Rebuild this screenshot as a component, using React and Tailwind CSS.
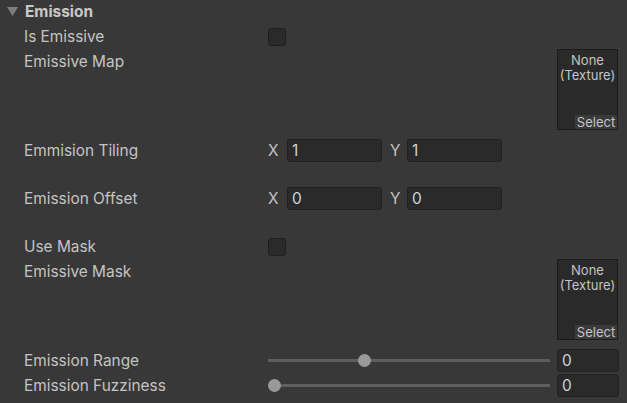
import React from "react";

const font = { fontFamily: "Inter, 'Noto Sans', sans-serif" };

function Label({ children }) {
  return <div className="w-[268px] shrink-0 pl-[24px] text-[15.4px] leading-[25px] text-[#c4c4c4]">{children}</div>;
}

function Checkbox() {
  return <div className="w-[18px] h-[18px] rounded-[3px] bg-[#2a2a2a] border border-[#1f1f1f]" />;
}

function Field({ value, w = "w-[95px]" }) {
  return (
    <div className={`${w} h-[23px] rounded-[3px] bg-[#2a2a2a] border border-[#212121] flex items-center pl-[4px] text-[15.4px] text-[#d2d2d2]`}>
      {value}
    </div>
  );
}

function TextureBox() {
  return (
    <div className="w-[61px] h-[81px] border border-[#1b1b1b] bg-[#2a2a2a] flex flex-col items-center relative">
      <div className="text-[13px] leading-[15px] text-[#c4c4c4] text-center mt-[3px] whitespace-nowrap">None<br />(Texture)</div>
      <div className="absolute right-0 bottom-0 w-[42px] h-[14px] bg-[#3a3a3a] text-[13px] leading-[14px] text-[#c4c4c4] text-center">Select</div>
    </div>
  );
}

function Slider({ pos }) {
  return (
    <div className="relative w-[282px] h-[23px] flex items-center">
      <div className="w-full h-[3px] bg-[#5e5e5e]" />
      <div className="absolute w-[13px] h-[13px] rounded-full bg-[#999999]" style={{ left: pos - 6.5 }} />
    </div>
  );
}

function Vec2({ x, y }) {
  return (
    <div className="flex items-center h-[23px]">
      <span className="w-[19px] text-[15.4px] text-[#c4c4c4]">X</span>
      <Field value={x} />
      <span className="w-[25px] pl-[8px] text-[15.4px] text-[#c4c4c4]">Y</span>
      <Field value={y} />
    </div>
  );
}

export default function App() {
  return (
    <div className="w-[627px] h-[403px] bg-[#383838] overflow-hidden flex flex-col" style={font}>
      <div className="h-[24px] flex items-center">
        <svg width="11" height="9" viewBox="0 0 11 9" className="ml-[7px] mt-[-2px]">
          <path d="M0 0 H11 L5.5 9 Z" fill="#7d7d7d" />
        </svg>
        <span className="ml-[7px] text-[15.4px] font-bold text-[#c8c8c8]">Emission</span>
      </div>
      <div className="h-[25px] flex items-center">
        <Label>Is Emissive</Label>
        <Checkbox />
      </div>
      <div className="flex h-[81px] mb-[9px]">
        <Label>Emissive Map</Label>
        <div className="flex-1" />
        <div className="mr-[9px]"><TextureBox /></div>
      </div>
      <div className="flex items-center h-[23px] mb-[25px]">
        <Label>Emmision Tiling</Label>
        <Vec2 x="1" y="1" />
      </div>
      <div className="flex items-center h-[23px] mb-[24px]">
        <Label>Emission Offset</Label>
        <Vec2 x="0" y="0" />
      </div>
      <div className="h-[25px] flex items-center">
        <Label>Use Mask</Label>
        <Checkbox />
      </div>
      <div className="flex h-[81px] mb-[9px]">
        <Label>Emissive Mask</Label>
        <div className="flex-1" />
        <div className="mr-[9px]"><TextureBox /></div>
      </div>
      <div className="flex items-center h-[23px] mb-[2px]">
        <Label>Emission Range</Label>
        <Slider pos={96} />
        <div className="ml-[7px]"><Field value="0" w="w-[62px]" /></div>
      </div>
      <div className="flex items-center h-[23px]">
        <Label>Emission Fuzziness</Label>
        <Slider pos={6} />
        <div className="ml-[7px]"><Field value="0" w="w-[62px]" /></div>
      </div>
    </div>
  );
}
